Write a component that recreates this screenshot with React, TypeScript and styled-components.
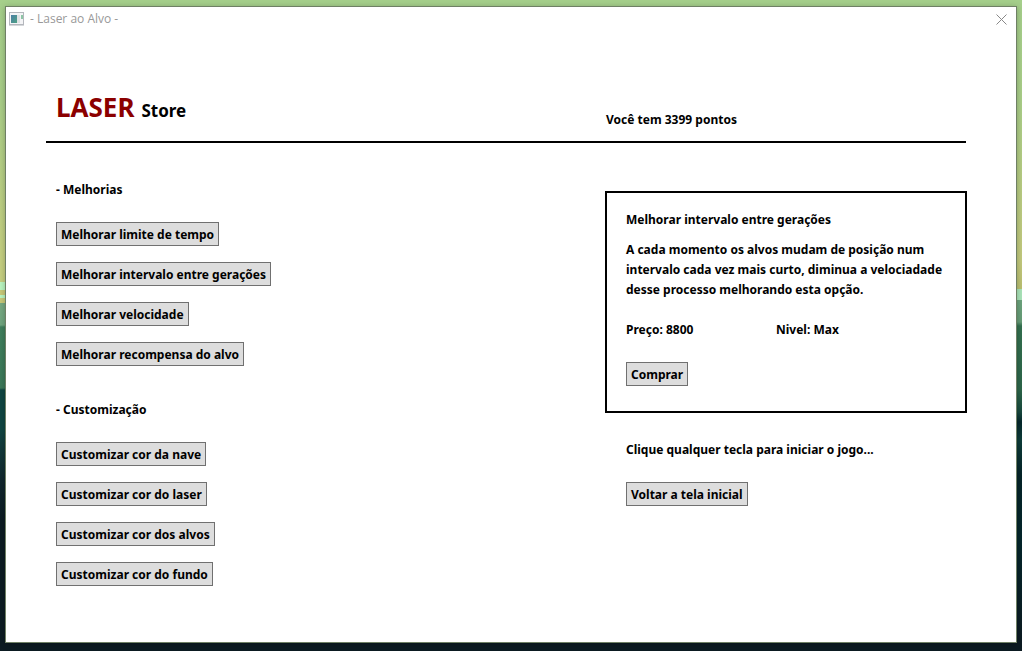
import React from "react";
import styled, { createGlobalStyle } from "styled-components";

const GlobalStyle = createGlobalStyle`
  *, *::before, *::after { box-sizing: border-box; }
  body {
    margin: 0;
    color: #000;
    font: 700 12px/20px "Noto Sans", "Open Sans", sans-serif;
  }
  h1, h2, p { margin: 0; font: inherit; }
`;

const leftScenery = `linear-gradient(
  #a5cf8b 0, #a9ce88 100px, #c5cf80 260px, #c6cf80 282px,
  #b9f5bf 282px, #b9f5bf 290px, #c8c978 290px, #c8c978 295px,
  #b9f5bf 295px, #b9f5bf 298px, #c8c978 298px, #c8c978 303px,
  #77a982 303px, #6fa57e 325px, #3f7f5c 327px, #3b7858 388px,
  #104642 390px, #104642 430px, #123b3b 445px, #11272e 480px,
  #0c1b22 520px, #0c1b22 100%)`;

const rightScenery = `linear-gradient(
  #a5cf8b 0, #a9ce88 100px, #c2c97c 260px, #b9bf70 289px,
  #a9e3b8 289px, #a9e3b8 300px, #6ba37c 300px, #659b76 322px,
  #33704f 326px, #2c6549 390px, #17483d 412px, #06282c 422px,
  #0d3c39 440px, #052428 475px, #04262b 540px, #0c1b22 640px)`;

const Desktop = styled.div`
  min-height: 100vh;
  display: flex;
  padding: 6px 5px 8px;
  background: ${leftScenery} left / 50% 100% no-repeat,
    ${rightScenery} right / 50% 100% no-repeat;
`;

const Window = styled.main`
  flex: 1;
  min-width: 0;
  border: 1px solid #6f8065;
  background: #fff;
  box-shadow: 0 1px 6px rgba(0, 0, 0, 0.25);
`;

const TitleBar = styled.header`
  display: flex;
  align-items: center;
  height: 24px;
  padding: 0 9px 0 3px;
  color: #999;
  font: 400 12px/20px "Open Sans", "Noto Sans", sans-serif;
`;

const WindowTitle = styled.span`
  flex: 1;
  margin-left: 5px;
`;

const CloseButton = styled.button`
  display: flex;
  padding: 0;
  border: 0;
  background: none;
`;

const Content = styled.div`
  padding: 58px 50px 56px 40px;
`;

const Columns = styled.div`
  display: grid;
  grid-template-columns: minmax(0, 1fr) 361px;
`;

const StoreHeader = styled(Columns)`
  align-items: end;
  height: 54px;
  border-bottom: 2px solid #000;
`;

const Brand = styled.h1`
  padding: 0 0 15px 10px;
  font-size: 17px;
  line-height: 36px;
`;

const BrandName = styled.span`
  margin-right: 7px;
  color: #8b0000;
  font-size: 26px;
`;

const Points = styled.p`
  padding: 0 0 14px 1px;
`;

const StoreBody = styled(Columns)`
  align-items: start;
`;

const Options = styled.div`
  display: flex;
  flex-direction: column;
  gap: 34px;
  padding: 37px 0 0 10px;
`;

const OptionGroup = styled.section`
  display: flex;
  flex-direction: column;
  align-items: flex-start;
  gap: 16px;
`;

const GroupTitle = styled.h2`
  margin-bottom: 6px;
`;

const Button = styled.button`
  height: 24px;
  padding: 1px 4px 0;
  border: 1px solid #707070;
  background: #ddd;
  color: #000;
  font: inherit;
  white-space: nowrap;
`;

const Details = styled.aside`
  margin-right: -1px;
  padding-top: 48px;
`;

const Card = styled.section`
  padding: 17px 18px 25px 19px;
  border: 2px solid #000;
`;

const Description = styled.p`
  margin: 10px 0 20px;
`;

const Facts = styled.div`
  display: grid;
  grid-template-columns: 150px 1fr;
  margin-bottom: 22px;
`;

const StartArea = styled.div`
  padding: 27px 0 0 21px;
`;

const Hint = styled.p`
  margin-bottom: 22px;
`;

const upgrades = [
  "Melhorar limite de tempo",
  "Melhorar intervalo entre gerações",
  "Melhorar velocidade",
  "Melhorar recompensa do alvo",
];

const customizations = [
  "Customizar cor da nave",
  "Customizar cor do laser",
  "Customizar cor dos alvos",
  "Customizar cor do fundo",
];

function AppIcon() {
  return (
    <svg width="16" height="14" viewBox="0 0 16 14" aria-hidden="true">
      <defs>
        <linearGradient id="screen" x1="0" y1="0" x2="1" y2="1">
          <stop offset="0" stopColor="#4a7fa5" />
          <stop offset="1" stopColor="#4fa184" />
        </linearGradient>
      </defs>
      <rect x="0.5" y="0.5" width="14" height="12" fill="#f4f4f6" stroke="#b4b7bd" />
      <path d="M0 13.5h15" stroke="#d5d7da" />
      <rect x="2" y="3" width="6" height="8" fill="url(#screen)" />
      <rect x="8" y="3" width="3" height="8" fill="#dfe2e4" />
      <rect x="12" y="3" width="2" height="4" fill="#8dc5a5" />
    </svg>
  );
}

function CloseIcon() {
  return (
    <svg width="11" height="11" viewBox="0 0 11 11" aria-hidden="true">
      <path d="M0.5 0.5l10 10M10.5 0.5l-10 10" stroke="#888" />
    </svg>
  );
}

function Group({ title, items }: { title: string; items: string[] }) {
  return (
    <OptionGroup>
      <GroupTitle>- {title}</GroupTitle>
      {items.map((item) => (
        <Button type="button" key={item}>{item}</Button>
      ))}
    </OptionGroup>
  );
}

export default function App() {
  return (
    <>
      <GlobalStyle />
      <Desktop>
        <Window>
          <TitleBar>
            <AppIcon />
            <WindowTitle>- Laser ao Alvo -</WindowTitle>
            <CloseButton type="button" aria-label="Fechar">
              <CloseIcon />
            </CloseButton>
          </TitleBar>
          <Content>
            <StoreHeader>
              <Brand>
                <BrandName>LASER</BrandName>Store
              </Brand>
              <Points>Você tem 3399 pontos</Points>
            </StoreHeader>
            <StoreBody>
              <Options>
                <Group title="Melhorias" items={upgrades} />
                <Group title="Customização" items={customizations} />
              </Options>
              <Details>
                <Card>
                  <h2>Melhorar intervalo entre gerações</h2>
                  <Description>
                    A cada momento os alvos mudam de posição num intervalo cada
                    vez mais curto, diminua a velociadade desse processo
                    melhorando esta opção.
                  </Description>
                  <Facts>
                    <p>Preço: 8800</p>
                    <p>Nivel: Max</p>
                  </Facts>
                  <Button type="button">Comprar</Button>
                </Card>
                <StartArea>
                  <Hint>Clique qualquer tecla para iniciar o jogo...</Hint>
                  <Button type="button">Voltar a tela inicial</Button>
                </StartArea>
              </Details>
            </StoreBody>
          </Content>
        </Window>
      </Desktop>
    </>
  );
}
